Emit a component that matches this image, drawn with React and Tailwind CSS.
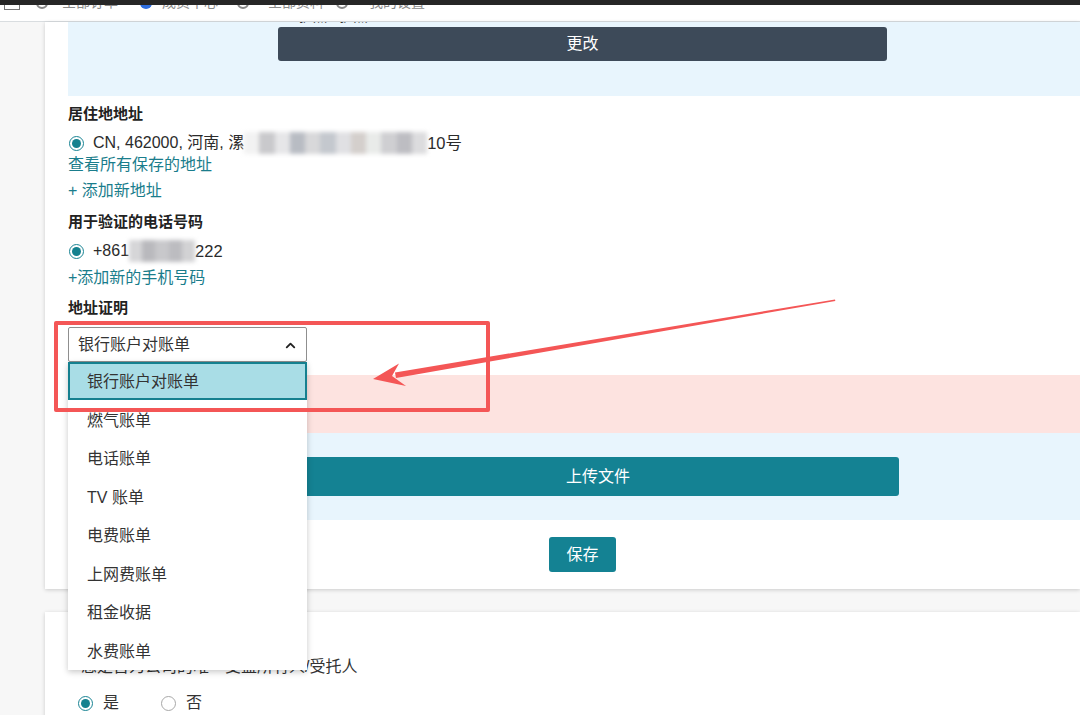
import { ChevronUp } from "lucide-react";

const options = [
  "银行账户对账单",
  "燃气账单",
  "电话账单",
  "TV 账单",
  "电费账单",
  "上网费账单",
  "租金收据",
  "水费账单",
];

function Radio({ checked }) {
  return (
    <span
      className={
        "flex h-[15px] w-[15px] shrink-0 items-center justify-center rounded-full border " +
        (checked ? "border-[#1a8494] bg-white" : "border-[#a8a8a8] bg-white")
      }
    >
      {checked && <span className="h-[9px] w-[9px] rounded-full bg-[#14818f]" />}
    </span>
  );
}

// pixelated blur over private data
function Mosaic({ shades, w }) {
  return (
    <span className="inline-flex h-[22px] blur-[2px]" style={{ width: w }}>
      {shades.map((c, i) => (
        <span key={i} className="h-full flex-1" style={{ background: c }} />
      ))}
    </span>
  );
}

export default function App() {
  return (
    <div className="relative h-[715px] w-[1080px] overflow-hidden bg-[#f7f7f7] font-['Liberation_Sans','Noto_Sans_CJK_SC',sans-serif] text-[#2b2b2b]">
      {/* dark top edge */}
      <div className="h-[5px] bg-[#262626]" />

      {/* cut-off filter strip */}
      <div className="h-[17px] overflow-hidden border-b border-[#d9dde0] bg-white">
        <div className="-mt-[13px] flex items-center pl-[4px] text-[14px] text-[#8a8a8a]">
          <span className="h-[15px] w-[16px] border border-[#777]" />
          <span className="ml-[16px] h-[12px] w-[12px] rounded-full border-2 border-[#888]" />
          <span className="ml-[14px]">全部订单</span>
          <span className="ml-[22px] h-[12px] w-[12px] rounded-full bg-[#2f6fe0]" />
          <span className="ml-[10px]">成员中心</span>
          <span className="ml-[19px] h-[12px] w-[12px] rounded-full border-2 border-[#888]" />
          <span className="ml-[19px]">全部资料</span>
          <span className="ml-[12px] h-[12px] w-[12px] rounded-full border-2 border-[#888]" />
          <span className="ml-[21px]">我的设置</span>
        </div>
      </div>

      <div className="flex">
        <div className="w-[45px] shrink-0" />
        <div className="flex-1">
          {/* first card */}
          <div className="bg-white pb-[17px] pl-[23px] shadow-[0_1px_4px_rgba(0,0,0,0.18)]">
            <div className="h-[74px] overflow-hidden bg-[#e8f5fd]">
              <div className="-mt-[13px] ml-[231px] h-[15px] text-[14px] leading-[15px] text-[#333]">护照 · 护照</div>
              <div className="ml-[210px] mt-[3px] flex h-[34px] w-[609px] items-center justify-center rounded-[3px] bg-[#3d4a59] text-[16px] text-white">
                更改
              </div>
            </div>

            <div className="mt-[6px] h-[24px] text-[15px] font-bold leading-[24px] text-[#222]">居住地地址</div>
            <div className="mt-[5px] flex h-[24px] items-center text-[16px]">
              <span className="ml-[1px]">
                <Radio checked />
              </span>
              <span className="ml-[9px]">CN, 462000, 河南, 漯</span>
              <Mosaic
                w={183}
                shades={["#f2f2f2", "#c9c9cc", "#e6e6e8", "#b8bcc3", "#d8d8da", "#c4c8ce", "#e0e0e3", "#d4cfcc", "#e9ebe9", "#cfcfd2", "#bdbdc2", "#dcdcde"]}
              />
              <span className="text-[16.5px]">10号</span>
            </div>
            <div className="mt-[1px] h-[18px] text-[16px] leading-[18px] text-[#1a7d8c]">查看所有保存的地址</div>
            <div className="mt-[5px] h-[24px] text-[16px] leading-[24px] text-[#1a7d8c]">+ 添加新地址</div>

            <div className="mt-[7px] h-[24px] text-[15px] font-bold leading-[24px] text-[#222]">用于验证的电话号码</div>
            <div className="mt-[5px] flex h-[24px] items-center text-[16px]">
              <span className="ml-[1px]">
                <Radio checked />
              </span>
              <span className="ml-[9px]">+861</span>
              <Mosaic w={66} shades={["#d6d6d8", "#b9b9bd", "#c8c8cb", "#bcbcc0", "#d2d2d4"]} />
              <span className="text-[16.5px]">222</span>
            </div>
            <div className="mt-[3px] h-[24px] text-[16px] leading-[24px] text-[#1a7d8c]">+添加新的手机号码</div>

            <div className="mt-[6px] h-[24px] text-[15px] font-bold leading-[24px] text-[#222]">地址证明</div>

            {/* select with open list */}
            <div className="relative z-10 mt-[7px] w-[239px]">
              <div className="flex h-[35px] items-center justify-between rounded-[2px] border border-[#8f8f8f] bg-white pl-[9px] pr-[8px] pt-[1px] text-[16px] text-[#333]">
                <span>银行账户对账单</span>
                <ChevronUp size={15} strokeWidth={3} className="text-[#222]" />
              </div>
              <div className="absolute left-0 top-full w-[239px] bg-white shadow-[0_2px_6px_rgba(0,0,0,0.22)]">
                {options.map((o, i) =>
                  i === 0 ? (
                    <div
                      key={o}
                      className="flex h-[38px] items-center border-2 border-[#15808f] bg-[#a9dde6] pl-[17px] pt-[1px] text-[16px] text-[#333]"
                    >
                      {o}
                    </div>
                  ) : (
                    <div key={o} className="flex h-[38.5px] items-center pl-[19px] pt-[3px] text-[16px] text-[#333]">
                      {o}
                    </div>
                  )
                )}
              </div>
              {/* red annotation box */}
              <div className="pointer-events-none absolute -left-[14px] -top-[6px] h-[91px] w-[436px] rounded-[2px] border-[4px] border-[#f45656]" />
            </div>

            <div className="mt-[13px] h-[58px] bg-[#fde3e0]" />
            <div className="h-[87px] bg-[#e8f5fd] pt-[24px]">
              <div className="ml-[229px] flex h-[39px] w-[602px] items-center justify-center rounded-[3px] bg-[#148293] text-[16px] text-white">
                上传文件
              </div>
            </div>

            <div className="ml-[481px] mt-[17px] flex h-[35px] w-[67px] items-center justify-center rounded-[3px] bg-[#148293] text-[16px] text-white">
              保存
            </div>
          </div>

          {/* second card */}
          <div className="mt-[23px] h-[200px] bg-white pl-[33px] shadow-[0_1px_4px_rgba(0,0,0,0.18)]">
            <div className="pt-[43px] h-[67px] pl-[3px] text-[16px] leading-[24px] text-[#333]">
              您是否为公司的唯一受益所有人/受托人
            </div>
            <div className="mt-[12px] flex h-[24px] items-center text-[16px] text-[#333]">
              <Radio checked />
              <span className="ml-[10px]">是</span>
              <span className="ml-[42px]">
                <Radio />
              </span>
              <span className="ml-[10px]">否</span>
            </div>
          </div>
        </div>
      </div>

      {/* red arrow annotation */}
      <svg className="pointer-events-none absolute left-0 top-0 z-20" width="1080" height="715">
        <polygon points="835,299.4 835.3,301 396,378 395,372.4" fill="#f45656" />
        <polygon points="373,379 399,363.5 392,376 406,386" fill="#f45656" />
      </svg>
    </div>
  );
}
